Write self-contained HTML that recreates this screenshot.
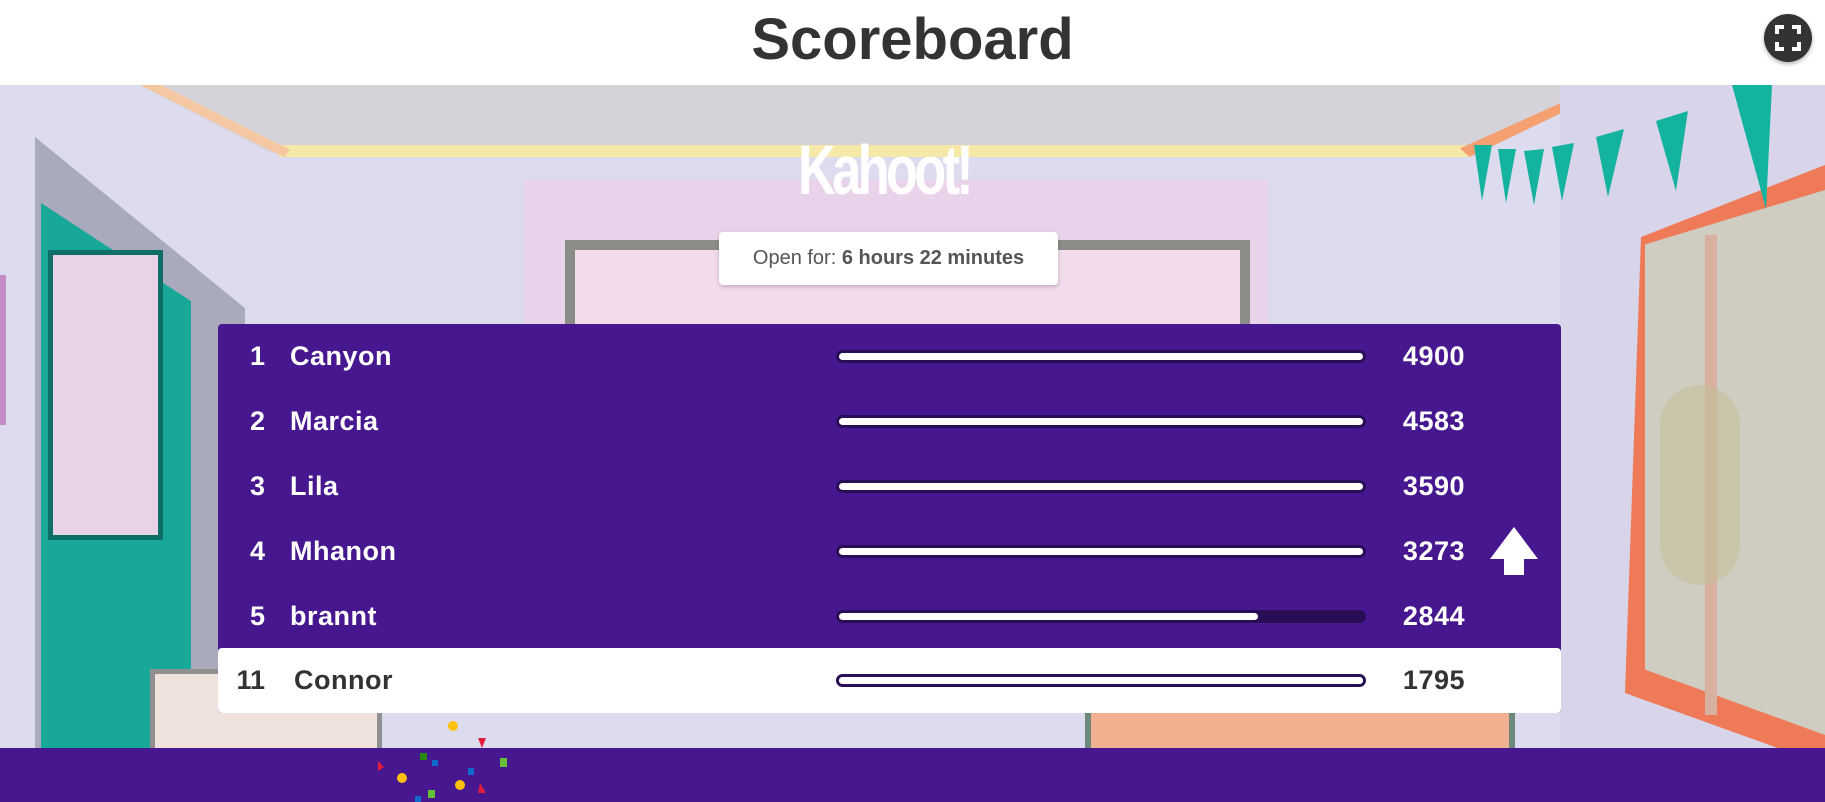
<!DOCTYPE html>
<html><head><meta charset="utf-8"><style>
*{margin:0;padding:0;box-sizing:border-box}
body{width:1825px;height:802px;overflow:hidden;background:#fff;font-family:"Liberation Sans",sans-serif;position:relative}
.abs{position:absolute}
#hdr{left:0;top:0;width:1825px;height:85px;background:#fff;z-index:5}
#title{left:0;width:1825px;top:6px;text-align:center;font-weight:bold;font-size:58px;color:#333;letter-spacing:0px}
#fs{left:1764px;top:14px;width:48px;height:48px;border-radius:50%;background:#333;box-shadow:0 2px 4px rgba(0,0,0,.3)}
#bg{left:0;top:85px;width:1825px;height:663px;background:#dcdcee;overflow:hidden}
#bot{left:0;top:748px;width:1825px;height:54px;background:#46178f}
.row{position:absolute;left:0;width:1343px;height:65px;color:#fff;font-weight:bold;font-size:27px}
.rk{position:absolute;right:1296px;top:17px;text-align:right}
.nm{position:absolute;left:72px;top:17px;letter-spacing:.5px}
.bar{position:absolute;left:618px;top:26px;width:530px;height:13px;border-radius:7px;background:#2a0d57;border:3px solid #2a0d57}
.bar i{display:block;height:100%;background:#fff;border-radius:4px}
.sc{position:absolute;right:96px;top:17px;letter-spacing:.5px}
</style></head><body>
<div id="hdr" class="abs"></div>
<div id="title" class="abs" style="z-index:6">Scoreboard</div>
<div id="fs" class="abs" style="z-index:6">
<svg width="48" height="48" viewBox="0 0 48 48"><g fill="none" stroke="#fff" stroke-width="4"><path d="M13 20v-7h7M28 13h7v7M35 28v7h-7M20 35h-7v-7"/></g></svg>
</div>
<div id="bg" class="abs">
 <div class="abs" style="left:140px;top:0;width:1450px;height:68px;background:#d6d2da;clip-path:polygon(0 0,100% 0,92% 100%,9% 100%)"></div>
 <div class="abs" style="left:279px;top:60px;width:1190px;height:12px;background:#f6e9a8"></div>
 <div class="abs" style="left:140px;top:0;width:150px;height:72px;background:#f4c7a0;clip-path:polygon(0 0,14% 0,100% 90%,96% 100%)"></div>
 <div class="abs" style="left:1460px;top:0;width:160px;height:72px;background:#f4a070;clip-path:polygon(88% 0,100% 0,6% 100%,0 88%)"></div>
 <div class="abs" style="left:524px;top:95px;width:745px;height:230px;background:#e9d3ea"></div>
 <div class="abs" style="left:565px;top:155px;width:685px;height:175px;background:#8c8c88"></div>
 <div class="abs" style="left:575px;top:165px;width:665px;height:165px;background:#f2dcec"></div>
 <div class="abs" style="left:35px;top:52px;width:210px;height:611px;background:#a9aabb;clip-path:polygon(0 0,100% 28%,100% 100%,0 100%)"></div>
 <div class="abs" style="left:41px;top:118px;width:150px;height:545px;background:#17a899;clip-path:polygon(0 0,100% 18%,100% 100%,0 100%)"></div>
 <div class="abs" style="left:48px;top:165px;width:115px;height:290px;background:#e9d3e6;border:5px solid #0e6e68"></div>
 <div class="abs" style="left:0;top:190px;width:6px;height:150px;background:#c58cc7"></div>
 <div class="abs" style="left:1560px;top:0;width:265px;height:663px;background:#d8d4ea"></div>
 <div class="abs" style="left:1625px;top:80px;width:200px;height:600px;background:#ee7a58;clip-path:polygon(8% 12%,100% 0,100% 100%,0 88%)"></div>
 <div class="abs" style="left:1645px;top:105px;width:180px;height:545px;background:#cfcdc2;clip-path:polygon(0 10%,100% 0,100% 100%,0 88%)"></div>
 <div class="abs" style="left:1705px;top:150px;width:12px;height:480px;background:#d8b0a0"></div>
 <div class="abs" style="left:1660px;top:300px;width:80px;height:200px;background:#c5c09a;border-radius:40px;opacity:.6"></div>
 <svg class="abs" style="left:1470px;top:0" width="355" height="200" viewBox="0 0 355 200"><g fill="#14b3a0"><path d="M4 60l18 0-10 56z"/><path d="M28 64l18 0-10 54z"/><path d="M54 66l20-2-10 56z"/><path d="M82 62l22-4-12 58z"/><path d="M126 52l28-8-16 68z"/><path d="M186 36l32-10-12 80z"/><path d="M262 0l40 0-6 124z"/></g></svg>
 <div class="abs" style="left:150px;top:584px;width:232px;height:79px;background:#f0e2dc;border:5px solid #909090;border-bottom:none"></div>
 <div class="abs" style="left:1085px;top:627px;width:430px;height:36px;background:#f2b090;border-left:6px solid #6b8a7c;border-right:6px solid #6b8a7c"></div>
 <div class="abs" style="left:773px;top:45px;width:200px;text-align:center;color:#fff;font-weight:bold;font-size:70px;letter-spacing:-5px;transform:scaleX(.75)">Kahoot!</div>
 <div class="abs" style="left:719px;top:147px;width:339px;height:53px;background:#fff;border-radius:4px;box-shadow:0 2px 4px rgba(0,0,0,.2);text-align:center;line-height:53px;font-size:20px;color:#555">Open for: <b>6 hours 22 minutes</b></div>
 <div class="abs" style="left:218px;top:239px;width:1343px;height:389px;background:#46178f;border-radius:4px;overflow:hidden">
  <div class="row" style="top:0"><span class="rk">1</span><span class="nm">Canyon</span><div class="bar"><i style="width:100%"></i></div><span class="sc">4900</span></div>
  <div class="row" style="top:65px"><span class="rk">2</span><span class="nm">Marcia</span><div class="bar"><i style="width:100%"></i></div><span class="sc">4583</span></div>
  <div class="row" style="top:130px"><span class="rk">3</span><span class="nm">Lila</span><div class="bar"><i style="width:100%"></i></div><span class="sc">3590</span></div>
  <div class="row" style="top:195px"><span class="rk">4</span><span class="nm">Mhanon</span><div class="bar"><i style="width:100%"></i></div><span class="sc">3273</span>
   <svg style="position:absolute;left:1272px;top:8px" width="48" height="50" viewBox="0 0 48 50"><path d="M24 0L48 32H34V48H14V32H0Z" fill="#fff"/></svg></div>
  <div class="row" style="top:260px"><span class="rk">5</span><span class="nm">brannt</span><div class="bar"><i style="width:80%"></i></div><span class="sc">2844</span></div>
  <div class="row" style="top:324px;background:#fff;color:#333;border-radius:4px"><span class="rk">11</span><span class="nm" style="left:76px">Connor</span><div class="bar" style="background:#fff"><i style="width:100%;background:#fff"></i></div><span class="sc">1795</span></div>
 </div>
</div>
<div id="bot" class="abs"></div>
<svg class="abs" style="left:370px;top:718px" width="150" height="84" viewBox="0 0 150 84"><circle cx="83" cy="8" r="5" fill="#ffc00a"/><path d="M108 20l8 0-4 10z" fill="#e21b3c"/><path d="M8 43l6 6-6 4z" fill="#e21b3c"/><rect x="50" y="35" width="7" height="7" fill="#26890c"/><rect x="130" y="40" width="7" height="9" fill="#66bf39"/><rect x="62" y="42" width="6" height="6" fill="#1368ce"/><circle cx="32" cy="60" r="5" fill="#ffc00a"/><circle cx="90" cy="67" r="5" fill="#ffc00a"/><rect x="98" y="50" width="6" height="7" fill="#1368ce"/><path d="M110 65l6 10-8 0z" fill="#e21b3c"/><rect x="58" y="72" width="7" height="8" fill="#66bf39"/><rect x="45" y="78" width="6" height="6" fill="#1368ce"/></svg>
</body></html>
